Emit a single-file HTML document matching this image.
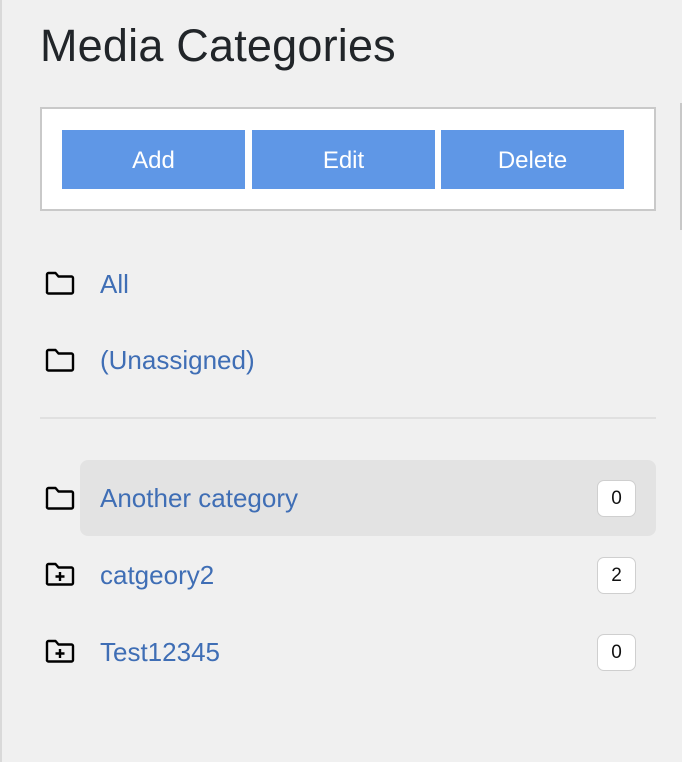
<!DOCTYPE html>
<html><head><meta charset="utf-8"><style>
html,body{margin:0;padding:0}
body{width:682px;height:762px;background:#f0f0f0;position:relative;overflow:hidden;font-family:"Liberation Sans",Arial,sans-serif}
.lb{position:absolute;left:0;top:0;width:2px;height:762px;background:#d9d9d9}
.sb{position:absolute;left:680px;top:103px;width:2px;height:127px;background:#c8c8c8}
h1{position:absolute;left:40px;top:16px;margin:0;font-weight:normal;font-size:45px;color:#212529;letter-spacing:0.2px;line-height:60px}
.box{position:absolute;left:40px;top:107px;width:612px;height:100px;background:#fff;border:2px solid #c9c9c9}
.btn{position:absolute;top:130px;height:59px;width:183px;background:#5f97e6;color:#fff;font-size:24px;line-height:61px;text-align:center}
.ic{position:absolute;left:44px;width:32px;height:26px}
.t{position:absolute;left:100px;font-size:26px;color:#3f6eb5;line-height:30px}
.hr{position:absolute;left:40px;top:417px;width:616px;height:2px;background:#e0e0e0}
.hl{position:absolute;left:80px;top:460px;width:576px;height:76px;background:#e3e3e3;border-radius:8px}
.bd{position:absolute;left:597px;width:37px;height:35px;background:#fff;border:1px solid #cfcfcf;border-radius:7px;font-size:19px;line-height:35px;text-align:center;color:#111}
</style></head><body>
<div class="lb"></div><div class="sb"></div>
<h1>Media Categories</h1>
<div class="box"></div>
<div class="btn" style="left:62px">Add</div>
<div class="btn" style="left:252px">Edit</div>
<div class="btn" style="left:441px">Delete</div>

<svg class="ic" style="top:270px" viewBox="0 0 32 26"><path d="M3 4.5a1.5 1.5 0 0 1 1.5-1.5h7l3 3.5h13a1.5 1.5 0 0 1 1.5 1.5v14a1.5 1.5 0 0 1-1.5 1.5h-23A1.5 1.5 0 0 1 3 21.5z" fill="none" stroke="#000" stroke-width="2.4" stroke-linejoin="round"/></svg>
<div class="t" style="top:269px">All</div>

<svg class="ic" style="top:347px" viewBox="0 0 32 26"><path d="M3 4.5a1.5 1.5 0 0 1 1.5-1.5h7l3 3.5h13a1.5 1.5 0 0 1 1.5 1.5v14a1.5 1.5 0 0 1-1.5 1.5h-23A1.5 1.5 0 0 1 3 21.5z" fill="none" stroke="#000" stroke-width="2.4" stroke-linejoin="round"/></svg>
<div class="t" style="top:345px">(Unassigned)</div>

<div class="hr"></div>
<div class="hl"></div>

<svg class="ic" style="top:485px" viewBox="0 0 32 26"><path d="M3 4.5a1.5 1.5 0 0 1 1.5-1.5h7l3 3.5h13a1.5 1.5 0 0 1 1.5 1.5v14a1.5 1.5 0 0 1-1.5 1.5h-23A1.5 1.5 0 0 1 3 21.5z" fill="none" stroke="#000" stroke-width="2.4" stroke-linejoin="round"/></svg>
<div class="t" style="top:483px">Another category</div>
<div class="bd" style="top:480px">0</div>

<svg class="ic" style="top:561px" viewBox="0 0 32 26"><path d="M3 4.5a1.5 1.5 0 0 1 1.5-1.5h7l3 3.5h13a1.5 1.5 0 0 1 1.5 1.5v14a1.5 1.5 0 0 1-1.5 1.5h-23A1.5 1.5 0 0 1 3 21.5z M16 11v9 M11.5 15.5h9" fill="none" stroke="#000" stroke-width="2.4" stroke-linejoin="round"/></svg>
<div class="t" style="top:560px">catgeory2</div>
<div class="bd" style="top:557px">2</div>

<svg class="ic" style="top:638px" viewBox="0 0 32 26"><path d="M3 4.5a1.5 1.5 0 0 1 1.5-1.5h7l3 3.5h13a1.5 1.5 0 0 1 1.5 1.5v14a1.5 1.5 0 0 1-1.5 1.5h-23A1.5 1.5 0 0 1 3 21.5z M16 11v9 M11.5 15.5h9" fill="none" stroke="#000" stroke-width="2.4" stroke-linejoin="round"/></svg>
<div class="t" style="top:637px">Test12345</div>
<div class="bd" style="top:634px">0</div>
</body></html>
